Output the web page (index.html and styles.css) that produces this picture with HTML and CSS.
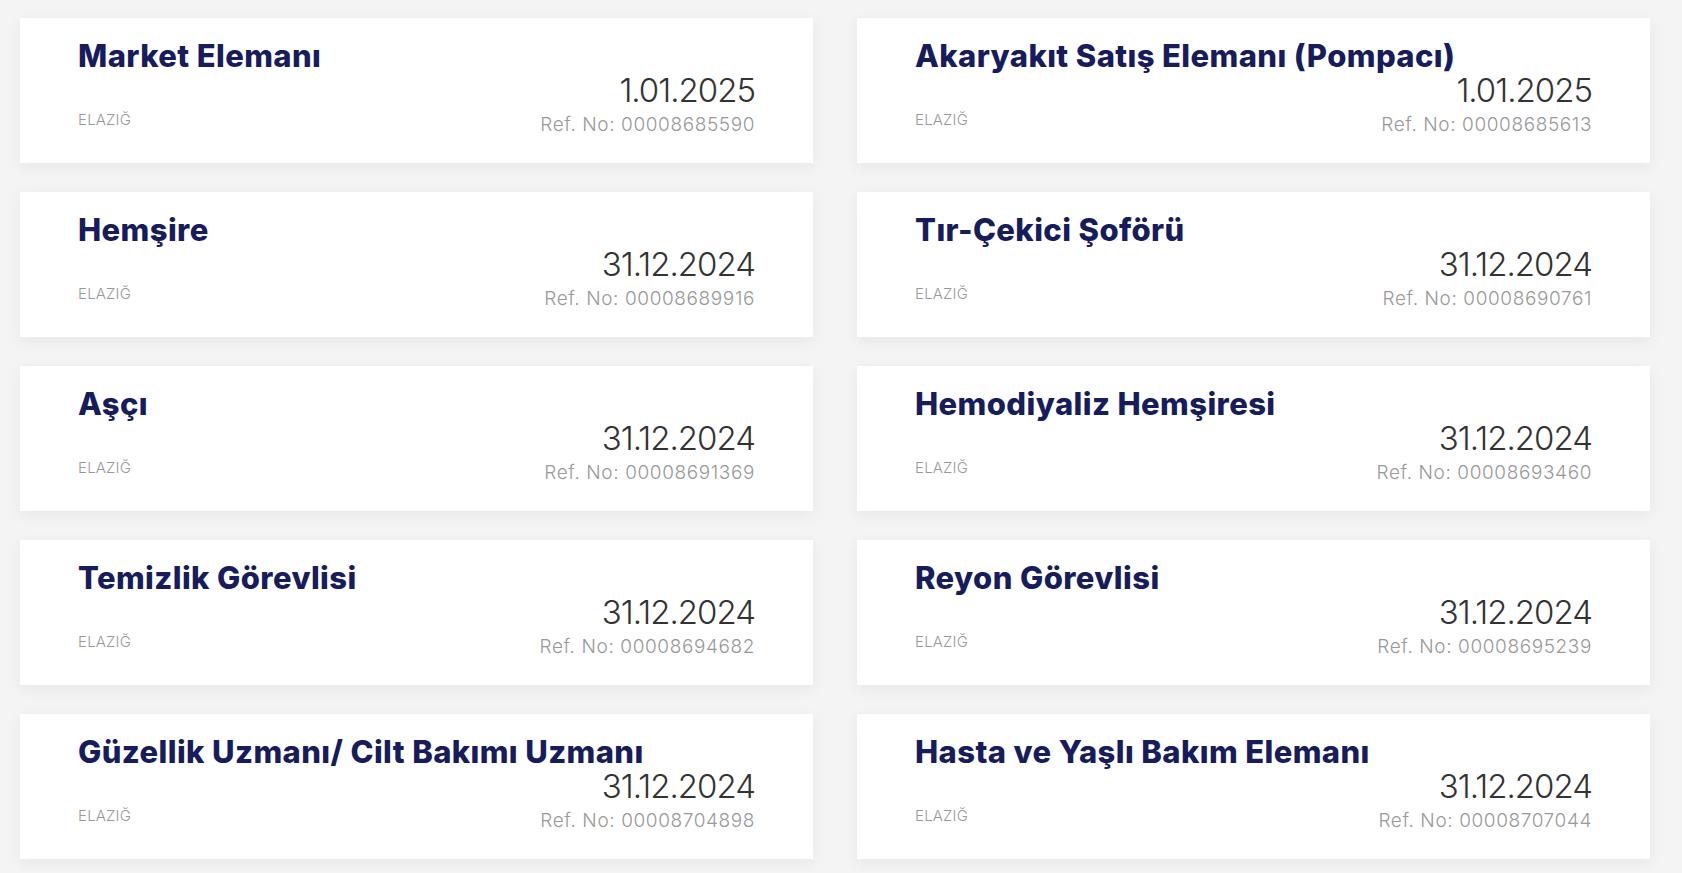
FILE: index.html
```html
<!DOCTYPE html>
<html lang="tr">
<head>
  <meta charset="UTF-8" />
  <meta name="viewport" content="width=device-width, initial-scale=1.0"/>
  <title>İş İlanları</title>
  <link rel="stylesheet" href="styles.css">
</head>
<body>
  <div class="jobs">
    <div class="job-card">
      <h2 class="job-title">Market Elemanı</h2>
      <div class="job-meta">
        <span class="job-city">ELAZIĞ</span>
        <div class="job-info">
          <div class="job-date">1.01.2025</div>
          <div class="job-ref">Ref. No: 00008685590</div>
        </div>
      </div>
    </div>

    <div class="job-card">
      <h2 class="job-title">Akaryakıt Satış Elemanı (Pompacı)</h2>
      <div class="job-meta">
        <span class="job-city">ELAZIĞ</span>
        <div class="job-info">
          <div class="job-date">1.01.2025</div>
          <div class="job-ref">Ref. No: 00008685613</div>
        </div>
      </div>
    </div>

    <div class="job-card">
      <h2 class="job-title">Hemşire</h2>
      <div class="job-meta">
        <span class="job-city">ELAZIĞ</span>
        <div class="job-info">
          <div class="job-date">31.12.2024</div>
          <div class="job-ref">Ref. No: 00008689916</div>
        </div>
      </div>
    </div>

    <div class="job-card">
      <h2 class="job-title">Tır-Çekici Şoförü</h2>
      <div class="job-meta">
        <span class="job-city">ELAZIĞ</span>
        <div class="job-info">
          <div class="job-date">31.12.2024</div>
          <div class="job-ref">Ref. No: 00008690761</div>
        </div>
      </div>
    </div>

    <div class="job-card">
      <h2 class="job-title">Aşçı</h2>
      <div class="job-meta">
        <span class="job-city">ELAZIĞ</span>
        <div class="job-info">
          <div class="job-date">31.12.2024</div>
          <div class="job-ref">Ref. No: 00008691369</div>
        </div>
      </div>
    </div>

    <div class="job-card">
      <h2 class="job-title">Hemodiyaliz Hemşiresi</h2>
      <div class="job-meta">
        <span class="job-city">ELAZIĞ</span>
        <div class="job-info">
          <div class="job-date">31.12.2024</div>
          <div class="job-ref">Ref. No: 00008693460</div>
        </div>
      </div>
    </div>

    <div class="job-card">
      <h2 class="job-title">Temizlik Görevlisi</h2>
      <div class="job-meta">
        <span class="job-city">ELAZIĞ</span>
        <div class="job-info">
          <div class="job-date">31.12.2024</div>
          <div class="job-ref">Ref. No: 00008694682</div>
        </div>
      </div>
    </div>

    <div class="job-card">
      <h2 class="job-title">Reyon Görevlisi</h2>
      <div class="job-meta">
        <span class="job-city">ELAZIĞ</span>
        <div class="job-info">
          <div class="job-date">31.12.2024</div>
          <div class="job-ref">Ref. No: 00008695239</div>
        </div>
      </div>
    </div>

    <div class="job-card">
      <h2 class="job-title">Güzellik Uzmanı/ Cilt Bakımı Uzmanı</h2>
      <div class="job-meta">
        <span class="job-city">ELAZIĞ</span>
        <div class="job-info">
          <div class="job-date">31.12.2024</div>
          <div class="job-ref">Ref. No: 00008704898</div>
        </div>
      </div>
    </div>

    <div class="job-card">
      <h2 class="job-title">Hasta ve Yaşlı Bakım Elemanı</h2>
      <div class="job-meta">
        <span class="job-city">ELAZIĞ</span>
        <div class="job-info">
          <div class="job-date">31.12.2024</div>
          <div class="job-ref">Ref. No: 00008707044</div>
        </div>
      </div>
    </div>
  </div>
</body>
</html>
```

FILE: styles.css
```css
:root {
  --bg: #f4f4f4;
  --card: #ffffff;
  --title: #171c5c;
  --text: #333333;
  --muted: #999999;
  --font: 'Inter', 'Open Sans', sans-serif;
}

html, body {
  margin: 0;
  padding: 0;
  background-color: var(--bg);
  font-family: var(--font);
}

.jobs {
  display: grid;
  grid-template-columns: 1fr 1fr;
  gap: 29px 44px;
  padding: 18px 32px 12px 20px;
}

.job-card {
  background-color: var(--card);
  height: 145px;
  box-sizing: border-box;
  padding: 20px 58px 0 58px;
  box-shadow: 0 4px 14px rgba(0, 0, 0, 0.06);
}

.job-title {
  margin: 0;
  font-size: 31px;
  font-weight: 800;
  line-height: 35px;
  color: var(--title);
  letter-spacing: 0.4px;
}

.job-meta {
  display: flex;
  justify-content: space-between;
  align-items: flex-end;
}

.job-city {
  font-size: 15px;
  font-weight: 300;
  color: var(--muted);
  letter-spacing: 0.2px;
  margin-bottom: 12px;
}

.job-info {
  text-align: right;
}

.job-date {
  font-size: 33px;
  font-weight: 300;
  line-height: 35px;
  color: var(--text);
  letter-spacing: -1px;
}

.job-ref {
  font-size: 19px;
  font-weight: 300;
  line-height: 33px;
  color: var(--muted);
  letter-spacing: 0.6px;
}
```
